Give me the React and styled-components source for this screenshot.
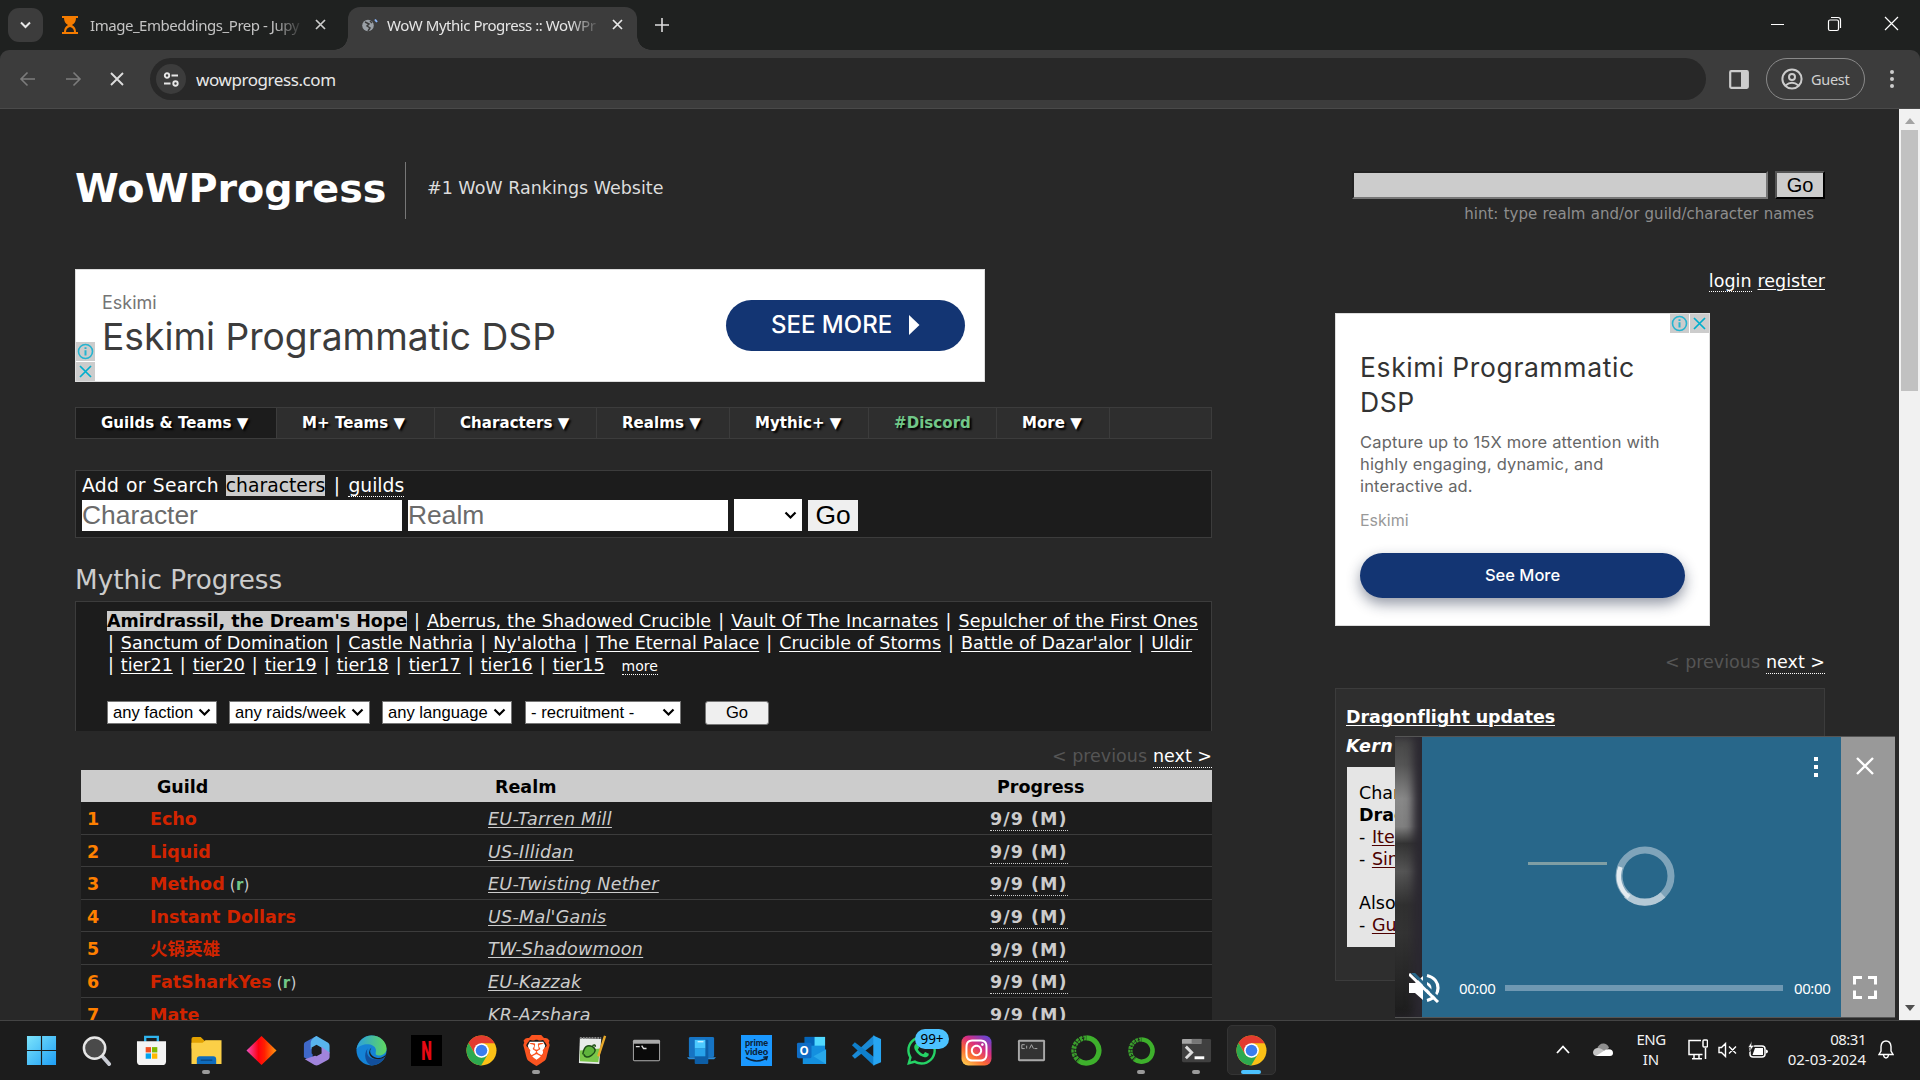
import React from "react";
import styled, { createGlobalStyle, css } from "styled-components";
import { FaWhatsapp, FaInstagram } from "react-icons/fa";
import { SiBrave } from "react-icons/si";

const verdana = `"DejaVu Sans", "Noto Sans CJK SC", sans-serif`;
const arial = `"Liberation Sans", Arial, sans-serif`;
const segoe = `"Noto Sans", "Open Sans", sans-serif`;
const google = `Inter, Lato, sans-serif`;

const Global = createGlobalStyle`
  * { box-sizing: border-box; }
  body { margin: 0; background: #282828; overflow: hidden; }
  button, input { font: inherit; margin: 0; }
`;

const Screen = styled.div`
  display: flex;
  flex-direction: column;
  width: 1920px;
  height: 1080px;
  overflow: hidden;
  background: #282828;
  font-family: ${verdana};
  color: #fff;
`;

/* ---------- browser chrome ---------- */
const Chrome = styled.header`
  flex: none;
  background: #1f2120;
`;
const TabStrip = styled.div`
  display: flex;
  height: 50px;
  padding: 7px 0 0 8px;
  font: 15px ${segoe};
`;
const TabSearch = styled.button`
  width: 35px;
  height: 34px;
  margin-top: 1px;
  padding: 0;
  border: 0;
  border-radius: 11px;
  background: #3c3c3c;
  display: grid;
  place-items: center;
`;
const Tab = styled.div`
  position: relative;
  display: flex;
  align-items: center;
  height: 43px;
  padding-bottom: 8px;
  color: ${(p) => (p.$active ? "#e6e6e6" : "#c4c4c4")};
  ${(p) =>
    p.$active
      ? css`
          width: 289px;
          margin-left: 12px;
          padding: 0 12px 8px 14px;
          border-radius: 12px 12px 0 0;
          background: #3c3c3c;
          &::before, &::after {
            content: "";
            position: absolute;
            bottom: 0;
            width: 14px;
            height: 14px;
          }
          &::before {
            left: -14px;
            background: radial-gradient(circle at 0 0, transparent 13.5px, #3c3c3c 14px);
          }
          &::after {
            right: -14px;
            background: radial-gradient(circle at 100% 0, transparent 13.5px, #3c3c3c 14px);
          }
        `
      : css`
          width: 293px;
          padding-left: 19px;
        `}
`;
const Favicon = styled.span`
  display: flex;
  width: 16px;
  margin-right: ${(p) => p.$gap}px;
`;
const TabTitle = styled.span`
  width: 210px;
  margin-right: ${(p) => p.$gap}px;
  overflow: hidden;
  white-space: nowrap;
  letter-spacing: -0.46px;
  mask-image: linear-gradient(90deg, #000 87%, transparent 102%);
`;
const NewTab = styled.span`
  display: flex;
  margin: 11px 0 0 18px;
`;
const WindowButtons = styled.div`
  display: flex;
  margin-left: auto;
  padding: 9px 21px 0 0;
  gap: 42px;
`;

const Toolbar = styled.div`
  display: flex;
  align-items: center;
  height: 59px;
  padding: 0 25px 0 0;
  border-bottom: 1px solid #4a4a4a;
  border-radius: 9px 9px 0 0;
  background: #3c3c3c;
`;
const NavButtons = styled.div`
  display: flex;
  align-items: center;
  width: 150px;
  padding-left: 19px;
  gap: 28.5px;
`;
const AddressBar = styled.div`
  display: flex;
  align-items: center;
  width: 1556px;
  height: 42px;
  padding-left: 6px;
  border-radius: 21px;
  background: #282828;
`;
const SiteInfo = styled.span`
  display: grid;
  place-items: center;
  width: 30px;
  height: 30px;
  border-radius: 50%;
  background: #3c3c3c;
`;
const Address = styled.span`
  margin-left: 10px;
  font: 17px ${segoe};
  color: #e8e8e8;
  letter-spacing: -0.42px;
`;
const SidePanel = styled.span`
  display: flex;
  margin-left: 23px;
`;
const Profile = styled.div`
  display: flex;
  align-items: center;
  width: 99px;
  height: 42px;
  margin: 0 auto 0 17px;
  padding-left: 14px;
  gap: 8px;
  border: 1px solid #8a8a8a;
  border-radius: 21px;
  font: 14.5px ${segoe};
  letter-spacing: -0.3px;
  color: #d0d0d0;
`;

/* ---------- page ---------- */
const Viewport = styled.div`
  position: relative;
  display: flex;
  flex: none;
  height: 911px;
  overflow: hidden;
`;
const Page = styled.div`
  flex: 1;
  height: 911px;
  padding: 0 74px 0 75px;
  overflow: hidden;
  white-space: nowrap;
`;
const SiteHeader = styled.div`
  display: flex;
  justify-content: space-between;
  height: 160px;
  padding-top: 53px;
`;
const Brand = styled.div`
  display: flex;
  line-height: 52px;
`;
const Logo = styled.h1`
  margin: 0;
  width: 330px;
  font-size: 39.7px;
  line-height: 52px;
`;
const Tagline = styled.span`
  height: 57px;
  padding-left: 21px;
  border-left: 1px solid #777;
  font-size: 17.5px;
  color: #ddd;
`;
const SiteSearch = styled.div`
  display: flex;
  flex-direction: column;
  align-items: flex-end;
  padding-top: 9px;
`;
const SiteSearchRow = styled.div`
  display: flex;
  gap: 7px;
`;
const SiteSearchInput = styled.input`
  width: 416px;
  height: 28px;
  border: 2px solid;
  border-color: #222 #767676 #767676 #222;
  background: #ccc;
`;
const SiteSearchButton = styled.button`
  width: 50px;
  height: 28px;
  padding: 0;
  border: 2px solid;
  border-color: #555 #000 #000 #555;
  background: #ccc;
  color: #000;
  font: 20px/22px ${arial};
`;
const Hint = styled.div`
  padding-right: 11px;
  font-size: 15px;
  line-height: 31px;
  word-spacing: 0.5px;
  color: #8e8e8e;
`;

const Columns = styled.div`
  display: flex;
  justify-content: space-between;
`;
const Main = styled.main`
  width: 1137px;
`;
const Aside = styled.aside`
  width: 490px;
`;

const Leader = styled.div`
  display: flex;
  width: 910px;
  height: 113px;
  border: 1px solid #ddd;
  background: #fff;
  font-family: ${google};
`;
const LeaderMarks = styled.div`
  display: flex;
  flex-direction: column;
  justify-content: flex-end;
  gap: 1px;
  width: 19px;
`;
const AdMark = styled.span`
  display: grid;
  place-items: center;
  width: 19px;
  height: 19px;
  background: #ccc;
`;
const LeaderCopy = styled.div`
  width: 631px;
  padding: 19px 0 0 7px;
`;
const LeaderBrand = styled.div`
  font-size: 18px;
  line-height: 28px;
  color: #757575;
`;
const LeaderTitle = styled.div`
  font-size: 37.2px;
  line-height: 40px;
  color: #3c3c3c;
`;
const LeaderButton = styled.div`
  display: flex;
  align-items: center;
  width: 239px;
  height: 51px;
  margin-top: 30px;
  padding: 0 0 2px 45px;
  gap: 17px;
  border-radius: 26px;
  background: #133573;
  font-size: 24px;
  font-weight: 500;
`;

const NavBar = styled.nav`
  display: flex;
  height: 32px;
  margin-top: 25px;
  border: 1px solid #3c3c3c;
  background: #2e2e2e;
`;
const NavItem = styled.span`
  width: ${(p) => p.$w}px;
  height: 30px;
  padding-left: 25px;
  border-right: 1px solid #3c3c3c;
  background: ${(p) => (p.$current ? "#1c1c1c" : "transparent")};
  color: ${(p) => (p.$green ? "#71c788" : "#fff")};
  font-size: 15px;
  font-weight: bold;
  line-height: 31px;
  letter-spacing: 0.06px;
  text-shadow: 2px 2px 2px #000;
`;

const Finder = styled.section`
  height: 68px;
  margin-top: 31px;
  padding: 2px 6px;
  border: 1px solid #3c3c3c;
  background: #1c1c1c;
`;
const FinderTitle = styled.div`
  height: 27px;
  font-size: 18.75px;
  line-height: 25.5px;
  word-spacing: 0.6px;
`;
const FinderLabel = styled.span`
  letter-spacing: 0.3px;
`;
const Marked = styled.span`
  background: #ccc;
  color: #000;
`;
const CurrentTier = styled(Marked)`
  font-weight: bold;
  letter-spacing: -0.06px;
`;
const Separator = styled.span`
  padding: 0 ${(p) => p.$pad}px;
  word-spacing: 0.6px;
`;
const DottedLink = styled.a`
  color: #fff;
  border-bottom: 1px dotted #fff;
`;
const FinderRow = styled.div`
  display: flex;
  align-items: flex-start;
  gap: 6px;
  font: 26.4px/31px ${arial};
`;
const FinderField = styled.div`
  width: 320px;
  height: 31px;
  background: #fff;
  color: #6b6b6b;
`;
const FinderSelect = styled.div`
  display: flex;
  align-items: center;
  justify-content: flex-end;
  width: 68px;
  height: 32px;
  margin-top: -1px;
  padding-right: 5px;
  background: #fff;
`;
const FinderGo = styled.button`
  width: 50px;
  height: 31px;
  padding: 0;
  border: 0;
  background: #efefef;
  color: #000;
`;

const Heading = styled.h2`
  margin: 21px 0 0;
  font-size: 26.25px;
  font-weight: normal;
  line-height: 42px;
  color: #ccc;
`;
const TierBox = styled.section`
  height: 130px;
  padding: 8px 0 0 31px;
  border: 1px solid #3c3c3c;
  border-bottom: 0;
  background: #1c1c1c;
`;
const TierLine = styled.div`
  height: 22px;
  font-size: 17.5px;
  line-height: 22px;
`;
const TierLink = styled.a`
  color: #fff;
  text-decoration: underline;
  text-decoration-thickness: 1px;
  text-underline-offset: 2px;
  letter-spacing: ${(p) => p.$ls}px;
  word-spacing: 0.2px;
`;
const MoreLink = styled(DottedLink)`
  margin-left: 17px;
  font-size: 14px;
`;
const Filters = styled.div`
  display: flex;
  margin-top: 25px;
  font: 16.6px/20px ${arial};
`;
const FilterSelect = styled.div`
  display: flex;
  align-items: center;
  justify-content: space-between;
  width: ${(p) => p.$w}px;
  height: 23px;
  margin-right: ${(p) => p.$gap}px;
  padding: 0 5px;
  border: 1px solid #767676;
  background: #fff;
  color: #000;
`;
const FilterGo = styled.button`
  width: 64px;
  height: 24px;
  padding: 0;
  border: 1px solid #767676;
  border-radius: 3px;
  background: #efefef;
  color: #000;
`;
const Pager = styled.div`
  display: flex;
  justify-content: flex-end;
  gap: 6px;
  height: ${(p) => p.$h}px;
  padding-top: ${(p) => p.$top}px;
  font-size: 17.5px;
  line-height: 23px;
  color: #555;
`;
const PagerNext = styled.a`
  height: 23px;
  color: #fff;
  border-bottom: 1px dotted #fff;
`;

const Table = styled.div`
  margin-left: 6px;
  background: #1c1c1c;
  font-size: 17.5px;
`;
const Row = styled.div`
  display: grid;
  grid-template-columns: 63px 338px 502px 1fr;
  height: 32.6px;
  padding-left: 6px;
  border-bottom: 1px solid #3c3c3c;
  line-height: 34.5px;
  font-weight: bold;
  color: #ccc;
`;
const HeadRow = styled(Row)`
  height: 32px;
  border: 0;
  background: #ccc;
  color: #000;
`;
const HeadCell = styled.span`
  padding-left: 7px;
`;
const Rank = styled.span`
  color: #ff8000;
`;
const Guild = styled.span`
  color: #d12400;
`;
const Recruit = styled.span`
  font-size: 15px;
  font-weight: normal;
  letter-spacing: 0.3px;
  color: #ccc;
  b { color: #71c788; }
`;
const Realm = styled.span`
  font-weight: normal;
  font-style: italic;
  letter-spacing: 0.28px;
  text-decoration: underline;
  text-decoration-thickness: 1px;
  text-underline-offset: 2px;
`;
const Progress = styled.span`
  line-height: 22px;
  padding-top: 6.2px;
`;
const ProgressLink = styled.a`
  display: inline-block;
  height: 23px;
  border-bottom: 1px dotted #ccc;
  letter-spacing: 1.05px;
`;

/* ---------- right column ---------- */
const Account = styled.div`
  display: flex;
  justify-content: flex-end;
  gap: 6px;
  height: 23px;
  font-size: 17.5px;
  line-height: 25px;
`;
const AccountLink = styled.a`
  height: 23px;
  border-bottom: ${(p) => (p.$dotted ? "1px dotted #fff" : 0)};
  text-decoration: ${(p) => (p.$dotted ? "none" : "underline")};
  text-decoration-thickness: 1px;
  text-underline-offset: 2px;
`;
const BoxAd = styled.div`
  width: 375px;
  height: 313px;
  margin-top: 21px;
  border: 1px solid #ddd;
  background: #fff;
  font-family: ${google};
`;
const BoxMarks = styled.div`
  display: flex;
  justify-content: flex-end;
  gap: 1px;
`;
const BoxCopy = styled.div`
  padding: 17px 24px 0;
`;
const BoxTitle = styled.div`
  font-size: 26.5px;
  line-height: 34.6px;
  color: #333;
  letter-spacing: 0.62px;
`;
const BoxText = styled.div`
  margin-top: 12px;
  font-size: 16.5px;
  line-height: 22px;
  letter-spacing: 0.17px;
  color: #666;
`;
const BoxBrand = styled.div`
  margin-top: 11px;
  font-size: 16px;
  line-height: 24px;
  color: #999;
`;
const BoxButton = styled.div`
  height: 45px;
  margin-top: 21px;
  border-radius: 23px;
  background: #133573;
  box-shadow: 0 6px 14px rgba(20, 30, 60, 0.45);
  font-size: 16.5px;
  line-height: 45px;
  text-align: center;
  font-weight: 500;
`;
const News = styled.section`
  height: 293px;
  padding: 13px 10px 0;
  border: 1px solid #3c3c3c;
  background: #2e2e2e;
  font-size: 17.5px;
`;
const NewsTitle = styled.div`
  font-weight: bold;
  line-height: 30px;
  text-decoration: underline;
  text-decoration-thickness: 1px;
  text-underline-offset: 2px;
  letter-spacing: -0.1px;
`;
const NewsSub = styled.div`
  font-weight: bold;
  font-style: italic;
  line-height: 28px;
  letter-spacing: 0.4px;
`;
const NewsBody = styled.div`
  height: 180px;
  margin: 7px 0 0 1px;
  padding: 15px 12px 0;
  background: #e5e5e5;
  color: #000;
  line-height: 22px;
`;
const NewsLink = styled.a`
  color: #4d0000;
  text-decoration: underline;
  text-decoration-thickness: 1px;
  text-underline-offset: 2px;
`;
const NewsLine = styled.div`
  height: 22px;
  word-spacing: 1px;
`;

/* ---------- floating player ---------- */
const Player = styled.div`
  position: absolute;
  left: 1395px;
  top: 627px;
  display: flex;
  width: 500px;
  height: 282px;
  border: solid #555;
  border-width: 1px 0;
`;
const PlayerStill = styled.div`
  width: 27px;
  background: linear-gradient(180deg, #444 0, #555 10%, #888 22%, #808080 32%, #333 38%, #555 48%, #303030 60%, #333 70%, #1c1c1c 100%);
  box-shadow: inset -9px 0 8px #2b2830;
`;
const PlayerScreen = styled.div`
  display: flex;
  flex-direction: column;
  align-items: flex-end;
  width: 419px;
  padding: 20px 10px 14px 0;
  background: #28678a;
`;
const PlayerMenu = styled.span`
  display: flex;
  margin-right: 13px;
`;
const PlayerMiddle = styled.div`
  display: flex;
  align-items: flex-start;
  margin: 69px 156px 0 0;
`;
const BufferLine = styled.div`
  width: 79px;
  height: 3px;
  margin: 16px 8px 0 0;
  background: #7f9ea4;
`;
const PlayerControls = styled.div`
  display: flex;
  align-items: center;
  height: 30px;
  margin: auto 1px 0 0;
  font: 15px ${segoe};
`;
const MuteIcon = styled.span`
  display: flex;
  margin-right: 19px;
`;
const Time = styled.span`
  width: 36px;
  letter-spacing: -0.4px;
`;
const SeekBar = styled.div`
  width: 278px;
  height: 6px;
  margin: 0 11px 0 10px;
  background: #6f98b2;
`;
const PlayerSide = styled.div`
  display: flex;
  flex-direction: column;
  align-items: center;
  justify-content: space-between;
  width: 54px;
  padding: 20px 6px 18px 0;
  background: #999;
`;

const Scrollbar = styled.div`
  display: flex;
  flex-direction: column;
  align-items: center;
  width: 21px;
  background: #f1f1f1;
`;
const ScrollArrow = styled.span`
  display: grid;
  place-items: center;
  height: 21px;
  padding-top: 3px;
`;
const DownArrow = styled(ScrollArrow)`
  padding: 0 0 3px;
`;
const Thumb = styled.div`
  width: 17px;
  height: 261px;
  margin-bottom: auto;
  background: #c1c1c1;
`;

/* ---------- taskbar ---------- */
const Taskbar = styled.footer`
  display: flex;
  flex: none;
  height: 60px;
  border-top: 1px solid #444;
  padding: 4px 0 0 14px;
  background: #1c1c1c;
  font: 15px/20px ${segoe};
`;
const TaskItem = styled.div`
  position: relative;
  display: flex;
  justify-content: center;
  width: 55px;
  height: 50px;
  padding-top: 10px;
`;
const TaskActive = styled.div`
  position: absolute;
  left: 3px;
  top: 0;
  width: 49px;
  height: 50px;
  border: 1px solid #343434;
  border-radius: 5px;
  background: #292929;
`;
const TaskIcon = styled.svg`
  position: relative;
  width: 31px;
  height: 31px;
`;
const Running = styled.span`
  position: absolute;
  left: ${(p) => (p.$active ? 17 : 23)}px;
  top: 45px;
  width: ${(p) => (p.$active ? 20 : 8)}px;
  height: 4px;
  border-radius: 2px;
  background: ${(p) => (p.$active ? "#4cc2ff" : "#9a9a9a")};
`;
const Badge = styled.span`
  position: absolute;
  left: 21px;
  top: 4px;
  width: 34px;
  height: 20px;
  border-radius: 10px;
  background: #4cc2ff;
  color: #000;
  font-size: 13.5px;
  text-align: center;
`;
const Tray = styled.div`
  display: flex;
  margin-left: auto;
  padding-right: 26px;
`;
const TrayIcon = styled.span`
  display: flex;
  align-items: center;
  height: 49px;
  margin-right: ${(p) => p.$gap}px;
`;
const TrayText = styled.div`
  width: ${(p) => p.$w}px;
  padding-top: ${(p) => p.$top}px;
  margin-right: ${(p) => p.$gap}px;
  text-align: ${(p) => p.$align};
  color: #f2f2f2;
  white-space: nowrap;
`;
const Tight = styled.div`
  letter-spacing: -0.5px;
`;

/* ---------- drawings ---------- */
const Stroke = ({ w = 16, h = 16, c = "#ccc", sw = 1.6, children }) => (
  <svg width={w} height={h} viewBox={`0 0 ${w} ${h}`} fill="none" stroke={c} strokeWidth={sw}>
    {children}
  </svg>
);
const Cross = ({ s = 12, c = "#ccc", sw = 1.7 }) => (
  <Stroke w={s} h={s} c={c} sw={sw}>
    <path d={`M1 1L${s - 1} ${s - 1}M${s - 1} 1L1 ${s - 1}`} />
  </Stroke>
);
const Chevron = () => (
  <Stroke w={13} h={9} c="#000" sw={2.2}>
    <path d="M1.5 1.5L6.5 6.5L11.5 1.5" />
  </Stroke>
);
const InfoMark = () => (
  <AdMark>
    <Stroke w={17} h={17} c="#25b4d0" sw={1.6}>
      <circle cx="8.5" cy="8.5" r="7" />
      <path d="M8.5 7.2V12.6M8.5 4.2V6" strokeWidth="2" />
    </Stroke>
  </AdMark>
);
const CloseMark = () => (
  <AdMark>
    <Cross s={13} c="#00aecd" />
  </AdMark>
);

const ChromeLogo = () => (
  <>
    <circle cx="16" cy="16" r="15.5" fill="#fbc116" />
    <path d="M2.6 8.2A15.5 15.5 0 0 1 29.5 8.5H16L9.5 19.8Z" fill="#e33b2e" />
    <path d="M2.6 8.2A15.5 15.5 0 0 0 15.6 31.5L22.5 19.8L16 23.5L9.4 19.8Z" fill="#2da94f" />
    <circle cx="16" cy="16" r="7.6" fill="#fff" />
    <circle cx="16" cy="16" r="6" fill="#3b7ded" />
  </>
);
const Anaconda = () => (
  <>
    <path d="M16 3A13 13 0 1 1 8 26.4" fill="none" stroke="#3eb02c" strokeWidth="5.4" />
    <path d="M16 3A13 13 0 0 0 8 26.4" fill="none" stroke="#3a9f2c" strokeWidth="5" strokeDasharray="3 0.9" />
    <path d="M14 3A13.2 13.2 0 0 0 6 24" fill="none" stroke="#1c1c1c" strokeWidth="0.9" strokeDasharray="3 2.5" />
  </>
);
const Term = ({ children }) => (
  <>
    <rect x="2" y="5" width="28" height="22" rx="1.5" fill="#a8a8a8" />
    {children}
  </>
);

const drawings = {
  windows: (
    <>
      <defs>
        <linearGradient id="win" x1="0" y1="0" x2="1" y2="1">
          <stop offset="0" stopColor="#7ce4fb" />
          <stop offset="1" stopColor="#1e9ef5" />
        </linearGradient>
      </defs>
      <path fill="url(#win)" d="M1 1H15.4V15.4H1ZM16.6 1H31V15.4H16.6ZM1 16.6H15.4V31H1ZM16.6 16.6H31V31H16.6Z" />
    </>
  ),
  search: (
    <>
      <path d="M22 22L29 30" stroke="#c9ccd4" strokeWidth="4" strokeLinecap="round" />
      <circle cx="14" cy="13.5" r="11" fill="#4a4a4a" stroke="#e6e6e6" strokeWidth="2.6" />
    </>
  ),
  store: (
    <>
      <path d="M9.5 7V2H22.5V7" fill="none" stroke="#2fb4ee" strokeWidth="2.4" />
      <path d="M1 6.5H31V27Q31 31 27 31H5Q1 31 1 27Z" fill="#f4f4f4" />
      <rect x="10" y="12.5" width="5.5" height="5.5" fill="#f25022" />
      <rect x="16.5" y="12.5" width="5.5" height="5.5" fill="#7fba00" />
      <rect x="10" y="19" width="5.5" height="5.5" fill="#00a4ef" />
      <rect x="16.5" y="19" width="5.5" height="5.5" fill="#ffb900" />
    </>
  ),
  folder: (
    <>
      <path d="M.5 4Q.5 2 2.5 2H10L14 6H30V14H.5Z" fill="#e2a100" />
      <path d="M.5 8H12L15 5.5H31.5V30H.5Z" fill="#fbcf47" />
      <path d="M6 30V25Q6 22 9 22H23Q26 22 26 25V30Z" fill="#0f6cbd" />
      <path d="M10 26H22" stroke="#0a4a86" strokeWidth="1.5" />
    </>
  ),
  diamond: (
    <>
      <defs>
        <linearGradient id="dia">
          <stop offset="0" stopColor="#f050c0" />
          <stop offset=".4" stopColor="#ff0010" />
          <stop offset=".6" stopColor="#ff2000" />
          <stop offset="1" stopColor="#ff9a10" />
        </linearGradient>
      </defs>
      <path d="M16 1L31.5 16L16 31L.5 16Z" fill="url(#dia)" />
    </>
  ),
  m365: (
    <>
      <path d="M16 1L4 7.5Q3 8.5 3 10V23L12 28V14L22 7Z" fill="#3f68c9" />
      <path d="M16 1L28 8Q29.5 9 29.5 11V19L20 13Q17 11 14 13L10 15V8Q10 4 16 1Z" fill="#58b5ec" />
      <path d="M29.5 18V23Q29.5 24.5 28 25.5L18 31Q16 32 14 31L4 25L21 19V12Z" fill="#a184dc" />
      <path d="M16 10L21 13V19L16 22L11 19V13Z" fill="#1c1c1c" />
    </>
  ),
  edge: (
    <>
      <defs>
        <linearGradient id="edge">
          <stop offset="0" stopColor="#2a9fe0" />
          <stop offset="1" stopColor="#5fd85f" />
        </linearGradient>
      </defs>
      <circle cx="16" cy="16" r="15.5" fill="#1583d6" />
      <path d="M.5 15C2 6 9 .5 16 .5C25 .5 31.5 7 31.5 14C31.5 20 26 22 22 21C19 20 21 18 20.5 15C20 11 15 9 10 9.5C6 10 2 12 .5 15Z" fill="url(#edge)" />
      <path d="M12 14C9 22 17 29 30 22.5C26 29 21 31.5 16 31.5C10 30 7 20 12 14Z" fill="#124f9c" />
      <path d="M16 13C13 17 15 22 21 23.5C26 24.5 29 22 31.5 19.5L30 22.5C24 27 14 25 13.5 18Q14 14 16 13Z" fill="#1c1c1c" />
    </>
  ),
  netflix: (
    <>
      <rect width="32" height="32" fill="#000" />
      <text x="10.5" y="25.5" fontFamily="Roboto" fontWeight="900" fontSize="27" fill="#e50914" textLength="11" lengthAdjust="spacingAndGlyphs">N</text>
    </>
  ),
  chrome: <ChromeLogo />,
  brave: (
    <>
      <path d="M9 7H23L25 11L22 21L16 27L10 21L7 11Z" fill="#fff" />
      <SiBrave x="0" y="0" size={32} color="#fb5420" />
    </>
  ),
  notepad: (
    <>
      <path d="M4 3L26 4L24 30L3 29Z" fill="#e9ecea" />
      <path d="M4 16L25 14L23 28L4 27Z" fill="#7ac74a" />
      <path d="M7 20Q9 8 17 12Q23 16 16 21Q10 25 8 20M17 11Q20 9 20 12" fill="#5fb43c" stroke="#1e4d17" strokeWidth="1.5" />
      <path d="M30 1L23 22" stroke="#e8a92a" strokeWidth="2.5" />
      <path d="M4 3H26" stroke="#888" strokeDasharray="2 1" strokeWidth="2" />
    </>
  ),
  cmd: (
    <Term>
      <rect x="3" y="9" width="26" height="17" fill="#0a0a0a" />
      <path d="M5 12H9M11 11L13 14H16" stroke="#ddd" strokeWidth="1.5" fill="none" />
    </Term>
  ),
  phone: (
    <>
      <rect x="3" y="2" width="26" height="21" rx="1.5" fill="#1674c4" />
      <path d="M1 23H31L29 25H3Z" fill="#2a8bd8" />
      <rect x="9" y="5" width="14" height="25" rx="1" fill="#0d5ea6" />
      <rect x="9" y="5" width="11" height="9" fill="#4cc9ff" />
      <rect x="9" y="14" width="11" height="8" fill="#28a3ea" />
      <path d="M12 7H18" stroke="#fff" strokeWidth="1" />
    </>
  ),
  prime: (
    <>
      <rect width="32" height="32" fill="#1a98ff" />
      <text x="16" y="11.5" fontFamily="Lato" fontWeight="900" fontSize="10" fill="#0c2238" textAnchor="middle" textLength="24" lengthAdjust="spacingAndGlyphs">prime</text>
      <text x="16" y="20.5" fontFamily="Lato" fontWeight="900" fontSize="10" fill="#0c2238" textAnchor="middle" textLength="24" lengthAdjust="spacingAndGlyphs">video</text>
      <path d="M5 23Q15 30 26 24M23 23L27 22.5L26 26" stroke="#0c2238" strokeWidth="1.6" fill="none" />
    </>
  ),
  outlook: (
    <>
      <rect x="9" y="2" width="21" height="16" fill="#1490df" />
      <rect x="19" y="2" width="11" height="9" fill="#50d9ff" />
      <rect x="9" y="2" width="10" height="9" fill="#0364b8" />
      <path d="M7 16L31 15V30H7Z" fill="#1490df" />
      <path d="M31 15V30L18 22Z" fill="#28a8ea" />
      <rect x="1" y="8" width="15" height="16" rx="1.5" fill="#0f6cc4" />
      <text x="8.5" y="20.5" fontFamily="Open Sans" fontWeight="700" fontSize="12" fill="#fff" textAnchor="middle">O</text>
    </>
  ),
  vscode: (
    <>
      <path d="M1 21.5L4 24.5L24 9V0L1 21.5Z" fill="#1a8ad6" />
      <path d="M1 10.5L4 7.5L24 23V32L1 10.5Z" fill="#0f7fcb" />
      <path d="M23 .5L31 4V28L23 31.5Z" fill="#27a5f2" />
    </>
  ),
  whatsapp: <FaWhatsapp x="-1" y="-1" size={34} color="#25d366" />,
  instagram: (
    <>
      <defs>
        <linearGradient id="insta" x1=".1" y1="1" x2=".8" y2="0">
          <stop offset="0" stopColor="#ffd04e" />
          <stop offset=".35" stopColor="#fb6a32" />
          <stop offset=".65" stopColor="#d92e7f" />
          <stop offset="1" stopColor="#6a45d0" />
        </linearGradient>
      </defs>
      <rect x=".5" y=".5" width="31" height="31" rx="7" fill="url(#insta)" />
      <FaInstagram x="3" y="3" size={26} color="#fff" />
    </>
  ),
  console: (
    <Term>
      <rect x="4" y="7" width="24" height="18" fill="#333" />
      <path d="M9 10H6V14H9M11 11V14M14 14L16 10L18 14M19 14H22" stroke="#aaa" strokeWidth="1" fill="none" />
    </Term>
  ),
  conda: <Anaconda />,
  condaSmall: (
    <g transform="translate(2 2) scale(.88)">
      <Anaconda />
    </g>
  ),
  terminal: (
    <>
      <rect x="1" y="4" width="30" height="24" rx="1.5" fill="#404040" />
      <path d="M1 5Q1 4 2.5 4H21V9H1Z" fill="#a5a5a5" />
      <path d="M11 4H21V9H11Z" fill="#777" />
      <path d="M5 12L11 18L5 24" stroke="#ddd" strokeWidth="3" fill="none" />
      <path d="M14 23.5H24" stroke="#fff" strokeWidth="3" />
    </>
  ),
};

const tasks = [
  ["windows"], ["search"], ["store"], ["folder", "run"], ["diamond"], ["m365"], ["edge"], ["netflix"],
  ["chrome"], ["brave", "run"], ["notepad"], ["cmd"], ["phone"], ["prime"], ["outlook"], ["vscode"],
  ["whatsapp", "badge"], ["instagram"], ["console"], ["conda"], ["condaSmall", "run"], ["terminal", "run"],
  ["chrome", "active"],
];

const navItems = [
  ["Guilds & Teams ▼", 201], ["M+ Teams ▼", 158], ["Characters ▼", 162], ["Realms ▼", 133], ["Mythic+ ▼", 139],
  ["#Discord", 128], ["More ▼", 113],
];

const guilds = [
  { name: "Echo", realm: "EU-Tarren Mill" },
  { name: "Liquid", realm: "US-Illidan" },
  { name: "Method", realm: "EU-Twisting Nether", recruiting: true },
  { name: "Instant Dollars", realm: "US-Mal'Ganis" },
  { name: "火锅英雄", realm: "TW-Shadowmoon" },
  { name: "FatSharkYes", realm: "EU-Kazzak", recruiting: true },
  { name: "Mate", realm: "KR-Azshara" },
];

const tierLines = [
  { track: 0.06, names: ["Aberrus, the Shadowed Crucible", "Vault Of The Incarnates", "Sepulcher of the First Ones"] },
  { track: 0, names: ["Sanctum of Domination", "Castle Nathria", "Ny'alotha", "The Eternal Palace", "Crucible of Storms", "Battle of Dazar'alor", "Uldir"] },
  { track: 0, names: ["tier21", "tier20", "tier19", "tier18", "tier17", "tier16", "tier15"] },
];

export default function App() {
  return (
    <Screen>
      <Global />
      <Chrome>
        <TabStrip>
          <TabSearch>
            <Stroke w={11} h={8} c="#e8e8e8" sw={2}><path d="M1 1.5L5.5 6L10 1.5" /></Stroke>
          </TabSearch>
          <Tab>
            <Favicon $gap={12}>
              <svg width="16" height="18" viewBox="0 0 16 18"><path d="M0 0H16V2H14Q14 7 10 9Q14 11 14 16H16V18H0V16H2Q2 11 6 9Q2 7 2 2H0Z" fill="#f57c00" /><path d="M4 16Q4 12 8 11Q12 12 12 16Z" fill="#1f2120" /></svg>
            </Favicon>
            <TabTitle $gap={15}>Image_Embeddings_Prep - Jupy</TabTitle>
            <Cross s={11} />
          </Tab>
          <Tab $active>
            <Favicon $gap={9}>
              <svg width="16" height="14" viewBox="0 0 16 14"><circle cx="6" cy="7.5" r="5.8" fill="#9aa0a6" /><path d="M3 4L7 6L5 8L8 10L6 13M8 3L10 5" stroke="#3c3c3c" strokeWidth="1.5" fill="none" /><path d="M13 1.5L15 4" stroke="#8ab4f8" strokeWidth="2" /></svg>
            </Favicon>
            <TabTitle $gap={15}>WoW Mythic Progress :: WoWPr</TabTitle>
            <Cross s={11} c="#e8e8e8" />
          </Tab>
          <NewTab><Stroke w={14} h={14} c="#ddd"><path d="M7 0V14M0 7H14" /></Stroke></NewTab>
          <WindowButtons>
            <Stroke w={15} h={16} c="#fff" sw={1}><path d="M1 8.5H14" /></Stroke>
            <Stroke w={15} h={16} c="#fff" sw={1.2}><rect x="1.5" y="4" width="10" height="10.5" rx="1.5" /><path d="M4 1.5H11Q13.5 1.5 13.5 4V12" /></Stroke>
            <Cross s={15} c="#fff" sw={1.2} />
          </WindowButtons>
        </TabStrip>
        <Toolbar>
          <NavButtons>
            <Stroke w={17} h={16} c="#7c7c7c"><path d="M16 8H2M8.500 1.500L2 8L8.500 14.500" /></Stroke>
            <Stroke w={17} h={16} c="#7c7c7c"><path d="M1 8H15M8.500 1.500L15 8L8.500 14.500" /></Stroke>
            <Cross s={14} c="#ddd" sw={1.9} />
          </NavButtons>
          <AddressBar>
            <SiteInfo>
              <Stroke w={16} h={15} c="#e6e6e6" sw={1.9}><circle cx="4" cy="3.5" r="2.2" /><path d="M8.5 3.5H15M1 11.5H7.5" /><circle cx="12.5" cy="11.5" r="2.2" /></Stroke>
            </SiteInfo>
            <Address>wowprogress.com</Address>
          </AddressBar>
          <SidePanel>
            <svg width="20" height="19"><rect x="1.2" y="1.2" width="17.6" height="16.6" rx="1" fill="none" stroke="#ccc" strokeWidth="2.2" /><rect x="12" y="1" width="7" height="17" fill="#ccc" /></svg>
          </SidePanel>
          <Profile>
            <Stroke w={22} h={22} c="#ccc" sw={2}><circle cx="11" cy="11" r="9.6" /><circle cx="11" cy="9" r="3" /><path d="M4.5 17.5Q11 12 17.5 17.5" /></Stroke>
            Guest
          </Profile>
          <svg width="6" height="20" fill="#ccc"><circle cx="3" cy="3" r="2" /><circle cx="3" cy="10" r="2" /><circle cx="3" cy="17" r="2" /></svg>
        </Toolbar>
      </Chrome>

      <Viewport>
        <Page>
          <SiteHeader>
            <Brand>
              <Logo>WoWProgress</Logo>
              <Tagline>#1 WoW Rankings Website</Tagline>
            </Brand>
            <SiteSearch>
              <SiteSearchRow>
                <SiteSearchInput />
                <SiteSearchButton>Go</SiteSearchButton>
              </SiteSearchRow>
              <Hint>hint: type realm and/or guild/character names</Hint>
            </SiteSearch>
          </SiteHeader>
          <Columns>
            <Main>
              <Leader>
                <LeaderMarks><InfoMark /><CloseMark /></LeaderMarks>
                <LeaderCopy>
                  <LeaderBrand>Eskimi</LeaderBrand>
                  <LeaderTitle>Eskimi Programmatic DSP</LeaderTitle>
                </LeaderCopy>
                <LeaderButton>
                  SEE MORE
                  <svg width="11" height="20"><path d="M0 0L10.5 10L0 20Z" fill="#fff" /></svg>
                </LeaderButton>
              </Leader>
              <NavBar>
                {navItems.map(([label, width], i) => (
                  <NavItem key={label} $w={width} $current={i === 0} $green={label[0] === "#"}>{label}</NavItem>
                ))}
              </NavBar>
              <Finder>
                <FinderTitle>
                  <FinderLabel>Add or Search </FinderLabel>
                  <Marked>characters</Marked>
                  <Separator $pad={1.8}> | </Separator>
                  <DottedLink>guilds</DottedLink>
                </FinderTitle>
                <FinderRow>
                  <FinderField>Character</FinderField>
                  <FinderField>Realm</FinderField>
                  <FinderSelect><Chevron /></FinderSelect>
                  <FinderGo>Go</FinderGo>
                </FinderRow>
              </Finder>
              <Heading>Mythic Progress</Heading>
              <TierBox>
                {tierLines.map(({ track, names }, i) => (
                  <TierLine key={i}>
                    {i === 0 && <CurrentTier>Amirdrassil, the Dream's Hope</CurrentTier>}
                    {names.map((name, j) => (
                      <React.Fragment key={name}>
                        <Separator $pad={0.9}>{i === 0 || j > 0 ? " | " : "| "}</Separator>
                        <TierLink $ls={track}>{name}</TierLink>
                      </React.Fragment>
                    ))}
                    {i === 2 && <MoreLink>more</MoreLink>}
                  </TierLine>
                ))}
                <Filters>
                  <FilterSelect $w={110} $gap={12}>any faction<Chevron /></FilterSelect>
                  <FilterSelect $w={141} $gap={12}>any raids/week<Chevron /></FilterSelect>
                  <FilterSelect $w={130} $gap={13}>any language<Chevron /></FilterSelect>
                  <FilterSelect $w={156} $gap={24}>- recruitment -<Chevron /></FilterSelect>
                  <FilterGo>Go</FilterGo>
                </Filters>
              </TierBox>
              <Pager $h={39} $top={14}><span>&lt; previous</span><PagerNext>next &gt;</PagerNext></Pager>
              <Table>
                <HeadRow><span /><HeadCell>Guild</HeadCell><HeadCell>Realm</HeadCell><HeadCell>Progress</HeadCell></HeadRow>
                {guilds.map(({ name, realm, recruiting }, i) => (
                  <Row key={name}>
                    <Rank>{i + 1}</Rank>
                    <span><Guild>{name}</Guild>{recruiting && <Recruit> (<b>r</b>)</Recruit>}</span>
                    <span><Realm>{realm}</Realm></span>
                    <Progress><ProgressLink>9/9 (M)</ProgressLink></Progress>
                  </Row>
                ))}
              </Table>
            </Main>
            <Aside>
              <Account><AccountLink $dotted>login</AccountLink><AccountLink>register</AccountLink></Account>
              <BoxAd>
                <BoxMarks><InfoMark /><CloseMark /></BoxMarks>
                <BoxCopy>
                  <BoxTitle>Eskimi Programmatic<br />DSP</BoxTitle>
                  <BoxText>Capture up to 15X more attention with<br />highly engaging, dynamic, and<br />interactive ad.</BoxText>
                  <BoxBrand>Eskimi</BoxBrand>
                  <BoxButton>See More</BoxButton>
                </BoxCopy>
              </BoxAd>
              <Pager $h={62} $top={25}><span>&lt; previous</span><PagerNext>next &gt;</PagerNext></Pager>
              <News>
                <NewsTitle>Dragonflight updates</NewsTitle>
                <NewsSub>Kern</NewsSub>
                <NewsBody>
                  <NewsLine>Char</NewsLine>
                  <NewsLine><b>Drag</b></NewsLine>
                  <NewsLine>- <NewsLink>Ite</NewsLink></NewsLine>
                  <NewsLine>- <NewsLink>Sin</NewsLink></NewsLine>
                  <NewsLine />
                  <NewsLine>Also</NewsLine>
                  <NewsLine>- <NewsLink>Gu</NewsLink></NewsLine>
                </NewsBody>
              </News>
            </Aside>
          </Columns>
        </Page>
        <Scrollbar>
          <ScrollArrow><svg width="10" height="6"><path d="M0 6L5 0L10 6Z" fill="#a3a3a3" /></svg></ScrollArrow>
          <Thumb />
          <DownArrow><svg width="10" height="6"><path d="M0 0L5 6L10 0Z" fill="#505050" /></svg></DownArrow>
        </Scrollbar>
        <Player>
          <PlayerStill />
          <PlayerScreen>
            <PlayerMenu>
              <svg width="4" height="20" fill="#fff"><rect width="4" height="4" /><rect y="8" width="4" height="4" /><rect y="16" width="4" height="4" /></svg>
            </PlayerMenu>
            <PlayerMiddle>
              <BufferLine />
              <Stroke w={60} h={60} c="#7fa4ba" sw={7}>
                <circle cx="30" cy="30" r="26" />
                <path d="M11.5 49A26.500 26.500 0 0 0 48 49" stroke="#b4c9d6" />
                <path d="M5.5 21A26 26 0 0 0 14 51" stroke="#e3ebf0" strokeWidth="4.5" />
              </Stroke>
            </PlayerMiddle>
            <PlayerControls>
              <MuteIcon>
                <svg width="31" height="30" viewBox="0 0 31 30">
                  <path d="M0 10H6L14 3V27L6 20H0Z" fill="#fff" />
                  <path d="M18 2.500C26 4.500 29 10 29 15C29 20 26 25.500 18 27.500" fill="none" stroke="#fff" strokeWidth="3.2" />
                  <path d="M18 9Q22.500 11 22.500 15Q22.500 19 18 21Z" fill="#fff" />
                  <path d="M3 -1L32 28" stroke="#28678a" strokeWidth="3" />
                  <path d="M0 1L29 29" stroke="#fff" strokeWidth="3" />
                </svg>
              </MuteIcon>
              <Time>00:00</Time>
              <SeekBar />
              <Time>00:00</Time>
            </PlayerControls>
          </PlayerScreen>
          <PlayerSide>
            <Cross s={18} c="#fff" sw={2.4} />
            <Stroke w={24} h={23} c="#fff" sw={3}><path d="M1.5 8.5V1.5H9M15 1.5H22.5V8.5M22.5 14.5V21.5H15M9 21.5H1.5V14.5" /></Stroke>
          </PlayerSide>
        </Player>
      </Viewport>

      <Taskbar>
        {tasks.map(([icon, state], i) => (
          <TaskItem key={i}>
            {state === "active" && <TaskActive />}
            <TaskIcon viewBox="0 0 32 32">{drawings[icon]}</TaskIcon>
            {(state === "run" || state === "active") && <Running $active={state === "active"} />}
            {state === "badge" && <Badge>99+</Badge>}
          </TaskItem>
        ))}
        <Tray>
          <TrayIcon $gap={23}><Stroke w={14} h={9} c="#fff" sw={1.8}><path d="M1 8L7 1.5L13 8" /></Stroke></TrayIcon>
          <TrayIcon $gap={23}>
            <svg width="20" height="14"><path d="M4 6Q6 0 11 .5Q15 1 16 5L10 9Z" fill="#8f8f8f" /><path d="M0 9Q1 5 5 5Q8 5 13 9L8 13H4Q0 13 0 9Z" fill="#c4c4c4" /><path d="M3 13L13 6.5Q20 5 20 10Q20 13 17 13Z" fill="#fff" /></svg>
          </TrayIcon>
          <TrayText $w={30} $top={4} $gap={22} $align="center"><Tight>ENG</Tight><div>IN</div></TrayText>
          <TrayIcon $gap={10}>
            <Stroke w={20} h={21} c="#fff" sw={1.5}><path d="M13 1.5H1V15.5H14.5M6 16V19.5M11 16V19.5M4 19.8H14M17.5 9V20" /><rect x="15" y="1" width="4.5" height="7" rx="1" /></Stroke>
          </TrayIcon>
          <TrayIcon $gap={11}>
            <Stroke w={19} h={16} c="#fff" sw={1.4}><path d="M1 5.5H3.5L7.5 1.5V14.5L3.5 10.5H1ZM11 4.5L18 11.5M18 4.5L11 11.5" /></Stroke>
          </TrayIcon>
          <TrayIcon $gap={19}>
            <svg width="20" height="18"><rect x="2" y="5" width="15" height="11" rx="3" fill="none" stroke="#fff" strokeWidth="1.5" /><path d="M7 7H15V14H4.5Z" fill="#fff" /><path d="M18 8.5Q20 9 20 10.5Q20 12 18 12.5Z" fill="#fff" /><path d="M4 0L0 6.5H2.5L1.5 11L6 4.5H3.5Z" fill="#fff" stroke="#1c1c1c" strokeWidth=".6" /></svg>
          </TrayIcon>
          <TrayText $w={79} $top={4} $gap={12} $align="right"><Tight>08:31</Tight><div>02-03-2024</div></TrayText>
          <TrayIcon>
            <Stroke w={16} h={19} c="#fff" sw={1.4}><path d="M1 14.5L3 11V6.5Q3.5 1 8 1Q12.5 1 13 6.5V11L15 14.5ZM5.5 15Q6 18 8 18Q10 18 10.5 15" /></Stroke>
          </TrayIcon>
        </Tray>
      </Taskbar>
    </Screen>
  );
}
